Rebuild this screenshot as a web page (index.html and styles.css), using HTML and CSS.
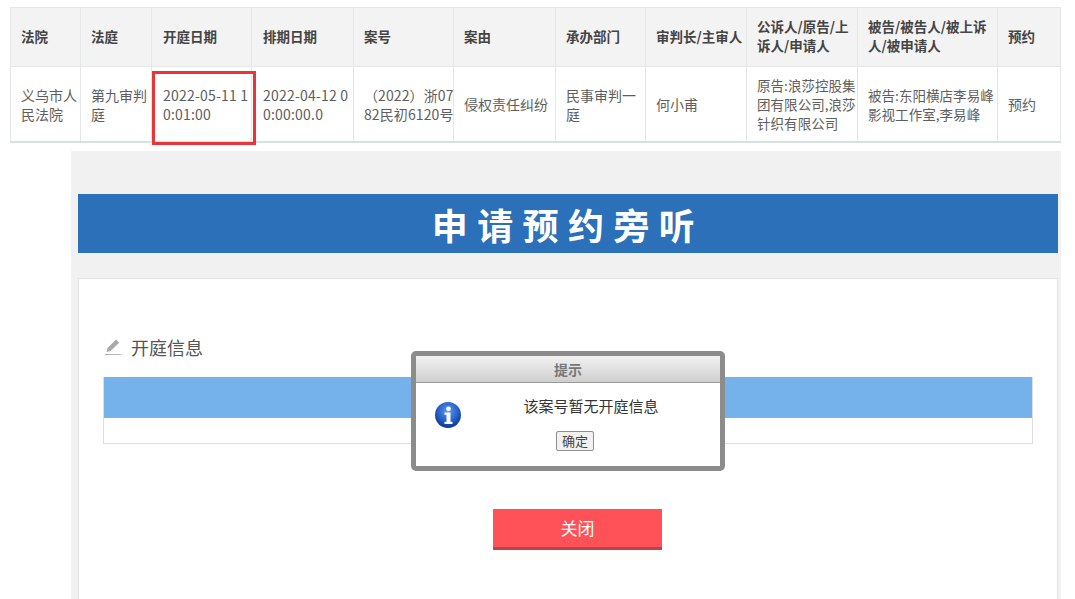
FILE: index.html
```html
<!DOCTYPE html>
<html lang="zh-CN">
<head>
<meta charset="utf-8">
<title>申请预约旁听</title>
<link rel="stylesheet" href="styles.css">
</head>
<body>
<table class="court-table">
  <colgroup>
    <col class="c1"><col class="c2"><col class="c3"><col class="c4"><col class="c5"><col class="c6"><col class="c7"><col class="c8"><col class="c9"><col class="c10"><col class="c11">
  </colgroup>
  <thead>
    <tr>
      <th>法院</th><th>法庭</th><th class="date-head">开庭日期</th><th class="date-head">排期日期</th><th>案号</th><th>案由</th><th>承办部门</th><th>审判长/主审人</th><th>公诉人/原告/上诉人/申请人</th><th>被告/被告人/被上诉人/被申请人</th><th>预约</th>
    </tr>
  </thead>
  <tbody>
    <tr>
      <td>义乌市人民法院</td><td>第九审判庭</td>
      <td class="date-cell">2022-05-11 10:01:00<span class="red-box"></span></td>
      <td class="date-cell">2022-04-12 00:00:00.0</td>
      <td class="case-cell">（2022）浙07<br>82民初6120号</td><td>侵权责任纠纷</td><td>民事审判一庭</td><td>何小甫</td>
      <td class="party-cell">原告:浪莎控股集团有限公司,浪莎针织有限公司</td>
      <td class="party-cell">被告:东阳横店李易峰影视工作室,李易峰</td><td>预约</td>
    </tr>
  </tbody>
</table>

<section class="panel">
  <h1 class="banner">申请预约旁听</h1>
  <div class="card">
    <h2 class="section-title">
      <svg class="pencil" width="18" height="18" viewBox="0 0 18 18" aria-hidden="true">
        <path d="M12 1.5l3.2 3.2L6.5 13l-4 1 1-4z" fill="#a9a9a9"/>
        <path d="M1 16.5h16" stroke="#b5b5b5" stroke-width="1"/>
      </svg>
      开庭信息
    </h2>
    <div class="info-table">
      <div class="info-head"></div>
      <div class="info-row"></div>
    </div>
    <button class="close-btn" type="button">关闭</button>
  </div>
</section>

<div class="dialog">
  <div class="dialog-title">提示</div>
  <div class="dialog-body">
    <svg class="info-icon" width="28" height="28" viewBox="0 0 28 28" aria-hidden="true">
      <defs>
        <radialGradient id="ball" cx="50%" cy="35%" r="65%">
          <stop offset="0" stop-color="#5f9cf0"/>
          <stop offset="0.7" stop-color="#1d55c0"/>
          <stop offset="1" stop-color="#0f3488"/>
        </radialGradient>
      </defs>
      <circle cx="14" cy="14" r="13" fill="url(#ball)"/>
      <circle cx="14.5" cy="7.8" r="2.4" fill="#fff"/>
      <path d="M10.5 11.5h6v9.2h2v2.3h-8v-2.3h2v-6.9h-2z" fill="#fff"/>
    </svg>
    <div class="dialog-main">
      <p class="dialog-msg">该案号暂无开庭信息</p>
      <button class="ok-btn" type="button">确定</button>
    </div>
  </div>
</div>
</body>
</html>
```
FILE: styles.css
```css
* { box-sizing: border-box; }
html, body { height: 599px; overflow: hidden; }
body {
  margin: 0;
  padding: 7px 14px 0 10px;
  background: #fff;
  position: relative;
  font-family: "Microsoft YaHei", "Noto Sans CJK SC", "Liberation Sans", sans-serif;
  color: #555;
}

.court-table {
  width: 1050px;
  table-layout: fixed;
  border-collapse: collapse;
  font-size: 14px;
  line-height: 19px;
  border-bottom: 2px solid #d5e3df;
}
.c1 { width: 70px; } .c2 { width: 71px; } .c3 { width: 100px; } .c4 { width: 102px; }
.c5 { width: 100px; } .c6 { width: 102px; } .c7 { width: 90px; } .c8 { width: 101px; }
.c9 { width: 111px; } .c10 { width: 140px; } .c11 { width: 63px; }

.court-table th, .court-table td {
  border: 1px solid #e3e8e6;
  padding: 0 0 0 10px;
  text-align: left;
  word-break: break-all;
  overflow: hidden;
}
.court-table th {
  height: 59px;
  padding-bottom: 2px;
  background: #f3f3f3;
  color: #444;
  font-weight: 700;
  font-size: 13.5px;
}
.court-table td {
  height: 75px;
  color: #5e5e5e;
  padding-top: 2px;
}
.court-table .date-head { padding-left: 11px; }
.court-table .date-cell { padding-left: 11px; letter-spacing: 0.2px; }
.court-table .case-cell { white-space: nowrap; letter-spacing: 0.1px; }
.court-table .party-cell { font-size: 13.5px; letter-spacing: 0.05px; }

.red-box {
  position: absolute;
  left: 152px;
  top: 71px;
  width: 104px;
  height: 74px;
  border: 3px solid #e8353a;
  pointer-events: none;
}

.panel {
  margin: 8px 0 0 61px;
  height: 460px;
  background: #f1f1f1;
  padding: 43px 3px 0 7px;
}
.banner {
  margin: 0;
  height: 59px;
  background: #2b70b9;
  color: #fff;
  font-size: 36px;
  font-weight: 700;
  line-height: 60px;
  letter-spacing: 9.4px;
  text-align: center;
  padding-left: 0;
}
.card {
  margin-top: 25px;
  height: 340px;
  background: #fff;
  border: 1px solid #e4e4e4;
  padding: 54px 24px 0 24px;
}
.section-title {
  display: flex;
  align-items: center;
  gap: 9px;
  margin: 0 0 16px 1px;
  height: 28px;
  font-size: 18px;
  font-weight: 400;
  line-height: 28px;
  color: #555;
}
.pencil { flex: none; }
.info-head { height: 41px; background: #75b2ec; }
.info-table { border: 1px solid #dedede; border-top: 0; }
.info-row { height: 25px; background: #fff; }

.close-btn {
  display: block;
  width: 169px;
  height: 41px;
  margin: 65px auto 0 390px;
  border: 0;
  border-bottom: 3px solid #b9444b;
  background: #ff5258;
  color: #fff;
  font: 400 17px/38px "Microsoft YaHei", "Noto Sans CJK SC", sans-serif;
  padding: 0;
}

.dialog {
  position: absolute;
  left: 411px;
  top: 351px;
  width: 314px;
  height: 120px;
  background: #fff;
  border: 5px solid #8c8c8c;
  border-radius: 5px;
}
.dialog-title {
  height: 27px;
  background: linear-gradient(#f2f2f2, #cfcfcf);
  border-bottom: 1px solid #999;
  color: #777;
  font-size: 14px;
  font-weight: 700;
  line-height: 26px;
  text-align: center;
}
.dialog-body {
  display: flex;
  padding: 18px 0 0 18px;
}
.info-icon { flex: none; }
.dialog-main {
  flex: 1;
  text-align: center;
  padding-right: 32px;
  margin-top: -5px;
}
.dialog-msg {
  margin: 0 0 15px;
  padding-left: 32px;
  font-size: 15px;
  line-height: 20px;
  color: #333;
}
.ok-btn {
  display: block;
  margin: 0 auto;
  width: 38px;
  height: 20px;
  padding: 0;
  background: #f1f1f1;
  border: 1px solid #8f8f8f;
  border-radius: 2px;
  color: #444;
  font: 400 13px/18px "Microsoft YaHei", "Noto Sans CJK SC", sans-serif;
}
```
